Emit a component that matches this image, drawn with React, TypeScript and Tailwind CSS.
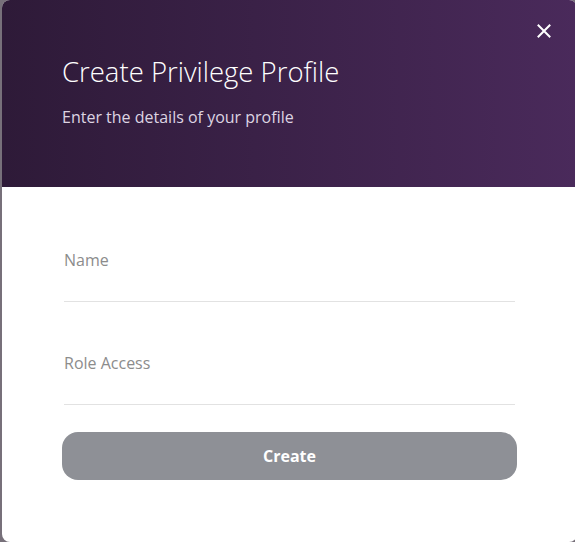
const CloseIcon = () => (
  <svg width="14" height="14" viewBox="0 0 14 14" fill="none" stroke="white" strokeWidth="2" strokeLinecap="square">
    <path d="M1.5 1.5 L12.5 12.5 M12.5 1.5 L1.5 12.5" />
  </svg>
);

const Field = ({ label }: { label: string }) => (
  <label className="block">
    <span className="block text-[16px] leading-5 text-[#8c8c8c]">{label}</span>
    <input
      type="text"
      className="block w-full h-[32px] bg-transparent outline-none border-b border-[#e2e2e2]"
    />
  </label>
);

export default function App() {
  return (
    <div
      className="w-[575px] h-[542px] overflow-hidden bg-[#77707a] pl-[2px]"
      style={{ fontFamily: '"Open Sans", "Noto Sans", sans-serif' }}
    >
      <div className="w-[575px] h-[542px] rounded-[8px] overflow-hidden bg-white flex flex-col">
        <div className="relative h-[187px] bg-gradient-to-r from-[#2e1a38] to-[#4a2a5b] pl-[60px] pt-[54px]">
          <button className="absolute right-[26px] top-[24px] p-0">
            <CloseIcon />
          </button>
          <h1 className="text-[27.5px] leading-9 text-white font-light">Create Privilege Profile</h1>
          <p className="mt-[17px] text-[16px] leading-5 text-[#ddd4e2]">Enter the details of your profile</p>
        </div>
        <div className="px-[60px] pt-[63px]">
          <div className="px-[2px] flex flex-col gap-[51px]">
            <Field label="Name" />
            <Field label="Role Access" />
          </div>
          <button className="mt-[27px] w-full h-[48px] rounded-[16px] bg-[#8e9096] text-white text-[16px] font-bold">
            Create
          </button>
        </div>
      </div>
    </div>
  );
}
